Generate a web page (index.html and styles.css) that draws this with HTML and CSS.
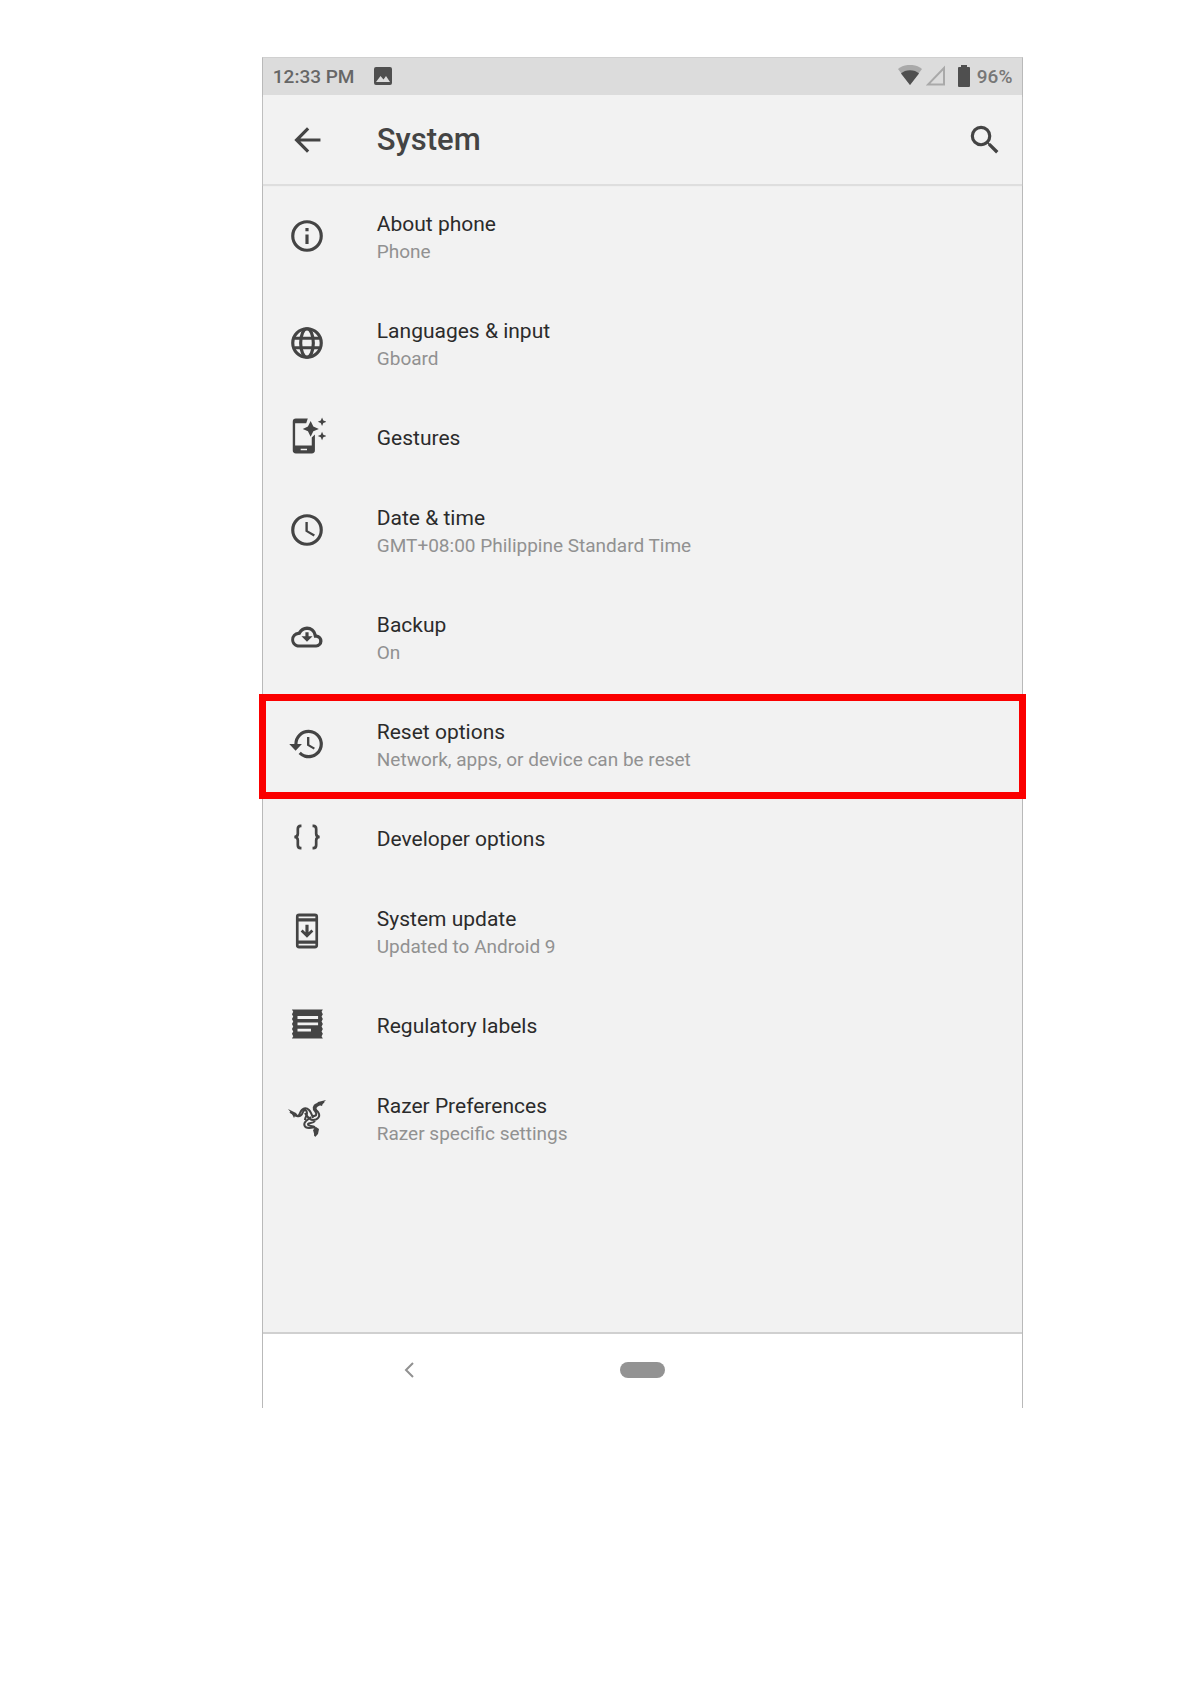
FILE: index.html
```html
<!DOCTYPE html>
<html lang="en">
<head>
  <meta charset="UTF-8">
  <meta name="viewport" content="width=device-width, initial-scale=1">
  <title>System</title>
  <link rel="stylesheet" href="styles.css">
</head>
<body>

  <div class="phone">

    <div class="status">
      <span>12:33 PM</span>
      <svg class="status-photo" width="18" height="18" viewBox="0 0 18 18">
        <path fill="#4f4f4f" fill-rule="evenodd" d="M2 0h14a2 2 0 0 1 2 2v14a2 2 0 0 1-2 2H2a2 2 0 0 1-2-2V2a2 2 0 0 1 2-2zM2 15h14l-4-6-2.500 3.500L6.500 9z"/>
      </svg>
      <div class="status-right">
        <svg width="24" height="22" viewBox="0 0 24 22">
          <path fill="#a9a9a9" d="M12 20L0 4C6-1.500 18-1.500 24 4z"/>
          <path fill="#4f4f4f" d="M12 20L3 8.500c4-4.500 14-4.500 18 0z"/>
        </svg>
        <svg width="20" height="22" viewBox="0 0 20 22">
          <path fill="none" stroke="#a9a9a9" stroke-width="2" d="M2 19.500H18V3z"/>
        </svg>
        <svg class="battery" width="12" height="22" viewBox="0 0 12 22">
          <path fill="#4f4f4f" d="M3 0h6v2h2a1 1 0 0 1 1 1v18a1 1 0 0 1-1 1H1a1 1 0 0 1-1-1V3a1 1 0 0 1 1-1h2z"/>
        </svg>
        <span class="percent">96%</span>
      </div>
    </div>

    <header class="toolbar">
      <button class="icon-btn" aria-label="Back">
        <svg class="icon" viewBox="0 0 24 24"><path d="M20.500 11H7.830l5.590-5.590L12 4l-8 8 8 8 1.410-1.410L7.830 13H20.500z"/></svg>
      </button>
      <h1>System</h1>
      <button class="icon-btn" aria-label="Search">
        <svg class="icon" viewBox="0 0 24 24"><path d="M15.500 14h-.79l-.28-.27A6.470 6.470 0 0 0 16 9.500 6.500 6.500 0 1 0 9.500 16c1.610 0 3.090-.59 4.230-1.570l.27.28v.79l5 4.990L20.490 19zm-6 0a4.500 4.500 0 1 1 0-9 4.500 4.500 0 0 1 0 9z"/></svg>
      </button>
    </header>

    <main class="list">
      <a class="row" href="#about">
        <svg class="icon" viewBox="0 0 24 24"><path d="M11 7h2v2h-2zm0 4h2v6h-2zm1-9a10 10 0 1 0 0 20 10 10 0 0 0 0-20zm0 18a8 8 0 1 1 0-16 8 8 0 0 1 0 16z"/></svg>
        <span class="text">
          <span class="title">About phone</span>
          <span class="summary">Phone</span>
        </span>
      </a>
      <a class="row" href="#languages">
        <svg class="icon line" viewBox="0 0 24 24"><circle cx="12" cy="12" r="9"/><ellipse cx="12" cy="12" rx="4" ry="9"/><path d="M4 9h16M4 15h16"/></svg>
        <span class="text">
          <span class="title">Languages &amp; input</span>
          <span class="summary">Gboard</span>
        </span>
      </a>
      <a class="row" href="#gestures">
        <svg class="icon" viewBox="0 0 24 24">
          <path fill-rule="evenodd" d="M5 1h7.500l-1 3H4.500v14h10.500v-5l2-2v10a2 2 0 0 1-2 2H5a2 2 0 0 1-2-2V3a2 2 0 0 1 2-2zM8 20v1h4v-1z"/>
          <path d="M14.300 2.500L16 6l3.500 1.500L16 9l-1.700 3.500L12.600 9 9.300 7.500 12.600 6zM21.500.3l.8 1.900 1.900.8-1.900.8-.8 1.900-.8-1.900L18.800 3l1.900-.8zM21.500 9.300l.8 1.900 1.900.8-1.900.8-.8 1.900-.8-1.900-1.900-.8 1.900-.8z"/>
        </svg>
        <span class="text">
          <span class="title">Gestures</span>
        </span>
      </a>
      <a class="row" href="#date">
        <svg class="icon" viewBox="0 0 24 24"><path d="M12 2a10 10 0 1 0 0 20 10 10 0 0 0 0-20zm0 18a8 8 0 1 1 0-16 8 8 0 0 1 0 16zm.5-13H11v6l5.250 3.150.75-1.230-4.500-2.670z"/></svg>
        <span class="text">
          <span class="title">Date &amp; time</span>
          <span class="summary">GMT+08:00 Philippine Standard Time</span>
        </span>
      </a>
      <a class="row" href="#backup">
        <svg class="icon" viewBox="0 0 24 24">
          <path d="M19.350 10.040A7.490 7.490 0 0 0 12 4C9.110 4 6.600 5.640 5.350 8.040A5.990 5.990 0 0 0 0 14c0 3.310 2.690 6 6 6h13a5 5 0 0 0 .35-9.960zM19 17.600H6a3.600 3.600 0 0 1-.4-7.200l1.370-.1.500-.95a5.100 5.100 0 0 1 9.520 1.490l.4 1.700 1.730.11A2.500 2.500 0 0 1 19 17.600z" transform="translate(2 2) scale(.833)"/>
          <path d="M11 9h2v2.500h2.500L12 15l-3.500-3.500H11z"/>
        </svg>
        <span class="text">
          <span class="title">Backup</span>
          <span class="summary">On</span>
        </span>
      </a>
      <a class="row marked" href="#reset">
        <svg class="icon" viewBox="0 0 24 24"><path d="M13 3a9 9 0 0 0-9 9H.8l4 4.200 4-4.200H6a7 7 0 1 1 7 7 6.900 6.900 0 0 1-4.900-2.060l-1.430 1.420A9 9 0 1 0 13 3zm-1 4.500v5.500l4.280 2.540.72-1.210-3.500-2.080V7.500z"/></svg>
        <span class="text">
          <span class="title">Reset options</span>
          <span class="summary">Network, apps, or device can be reset</span>
        </span>
      </a>
      <a class="row" href="#developer">
        <svg class="icon line thin" viewBox="0 0 24 24"><path d="M8.500 5H8Q6.200 5 6.200 7v3Q6.200 12 4 12 6.200 12 6.200 14v3Q6.200 19 8 19h.5M15.500 5h.5Q17.800 5 17.800 7v3Q17.800 12 20 12 17.800 12 17.800 14v3Q17.800 19 16 19h-.5"/></svg>
        <span class="text">
          <span class="title">Developer options</span>
        </span>
      </a>
      <a class="row" href="#update">
        <svg class="icon" viewBox="0 0 24 24"><path fill-rule="evenodd" d="M7 1h10a2 2 0 0 1 2 2v18a2 2 0 0 1-2 2H7a2 2 0 0 1-2-2V3a2 2 0 0 1 2-2zM6.700 2.800v1.200h10.600V2.800zM6.700 6v12h10.600V6zM6.700 20v1.200h10.600V20z"/><path d="M11 8h2v4.800l1.800-1.800L16 12.300l-4 4-4-4L9.200 11l1.800 1.800z"/></svg>
        <span class="text">
          <span class="title">System update</span>
          <span class="summary">Updated to Android 9</span>
        </span>
      </a>
      <a class="row" href="#regulatory">
        <svg class="icon" viewBox="0 0 24 24"><path fill-rule="evenodd" d="M2.500 2.800h19.500l-.8 1.500.8 1.500-.8 1.500.8 1.500-.8 1.600.8 1.600-.8 1.600.8 1.600-.8 1.500.8 1.500-.8 1.500.8 1.500H2.500l.8-1.500-.8-1.500.8-1.500-.8-1.500.8-1.600-.8-1.600.8-1.600-.8-1.600.8-1.500-.8-1.500.8-1.500zM6 7v1.800h13V7zM6 11v1.800h13V11zM6 15v1.800h8.500V15z"/></svg>
        <span class="text">
          <span class="title">Regulatory labels</span>
        </span>
      </a>
      <a class="row" href="#razer">
        <svg class="icon snakes" viewBox="0 0 38 38">
          <path d="M2 13l5 3c2 2 4 1 5-2 2-5 6-6 9-3 2 2 3 5 4 8M9 17c3 1 5-1 6-4 1-3 4-2 4 1 0 3-2 4-2 7"/>
          <path d="M36 3l-7 4c-3 2-1 4 1 6 3 4 0 8-5 8-4 0-6-4-8-7M29 5c-4 2-4 5-2 7 2 3 2 5-2 5"/>
          <path d="M27 37l1-6c0-3-3-3-7-2-5 0-6-4-3-7l5-4M27 28c-3-2-7 0-7-3 1-2 5 0 7-3"/>
          <path class="head" d="M0 10l8 4 3 4-4-1-1 2-2-4zM38 1l-8 2-4 5 5-2 3 1 1-3zM27 38l-2-7 3-3 3 2-1 5z"/>
        </svg>
        <span class="text">
          <span class="title">Razer Preferences</span>
          <span class="summary">Razer specific settings</span>
        </span>
      </a>
    </main>

    <nav class="navbar">
      <button class="nav-back" aria-label="Back">
        <svg width="10" height="16" viewBox="0 0 10 16"><path fill="none" stroke="#919191" stroke-width="2" d="M9 1L2 8l7 7"/></svg>
      </button>
      <button class="nav-home" aria-label="Home"></button>
    </nav>

  </div>

</body>
</html>
```
FILE: styles.css
```css
* {
  box-sizing: border-box;
}
body {
  margin: 0;
  padding: 57px 14% 0 22%;
  background: white;
  font-family: Roboto, sans-serif;
  color: #2b2b2b;
}
button {
  padding: 0;
  border: none;
  background: none;
  cursor: pointer;
}
svg {
  display: block;
  flex-shrink: 0;
}
.phone {
  border: 1px solid #b9b9b9;
  border-top-color: #d0d0d0;
  border-bottom: none;
  background: #f2f2f2;
}

/* status bar */
.status {
  display: flex;
  align-items: center;
  height: 37px;
  padding: 0 10px 1px;
  background: #dcdcdc;
  color: #666;
  font-size: 19px;
  font-weight: 500;
}
.status-photo {
  margin-left: 20px;
}
.status-right {
  display: flex;
  align-items: center;
  gap: 4px;
  margin-left: auto;
}
.battery {
  margin-left: 8px;
}
.percent {
  margin-left: 3px;
  color: #777;
}

/* title bar */
.toolbar {
  display: flex;
  align-items: center;
  height: 89px;
  padding: 0 18px 0 25px;
  box-shadow: 0 2px 1px #dedede;
}
h1 {
  flex: 1;
  margin: 0 0 0 51px;
  color: #444;
  font-size: 31px;
  font-weight: 500;
}
.icon {
  width: 38px;
  height: 38px;
  fill: #444;
}
.line {
  fill: none;
  stroke: #444;
  stroke-width: 2;
}
.thin {
  stroke-width: 1.7;
}
.snakes {
  fill: none;
  stroke: #444;
  stroke-width: 2;
}
.head {
  fill: #444;
  stroke: none;
}

/* settings list */
.list {
  padding-bottom: 159px;
}
.row {
  position: relative;
  display: flex;
  align-items: center;
  gap: 51px;
  padding: 26px 25px;
  color: inherit;
  text-decoration: none;
}
.row .icon {
  margin: -8px 0 -4px;
}
.title, .summary {
  display: block;
}
.title {
  font-size: 21px;
  line-height: 28px;
}
.summary {
  color: #919191;
  font-size: 19px;
  line-height: 27px;
}
.marked::after {
  content: "";
  position: absolute;
  inset: 2px -4px 0;
  border: 7px solid #fb0000;
}

/* bottom navigation */
.navbar {
  display: grid;
  grid-template-columns: 5fr 3fr 5fr;
  place-items: center;
  height: 76px;
  padding-bottom: 2px;
  border-top: 2px solid #d0d0d0;
  background: white;
}
.nav-home {
  width: 45px;
  height: 16px;
  border-radius: 8px;
  background: #939393;
}
```
